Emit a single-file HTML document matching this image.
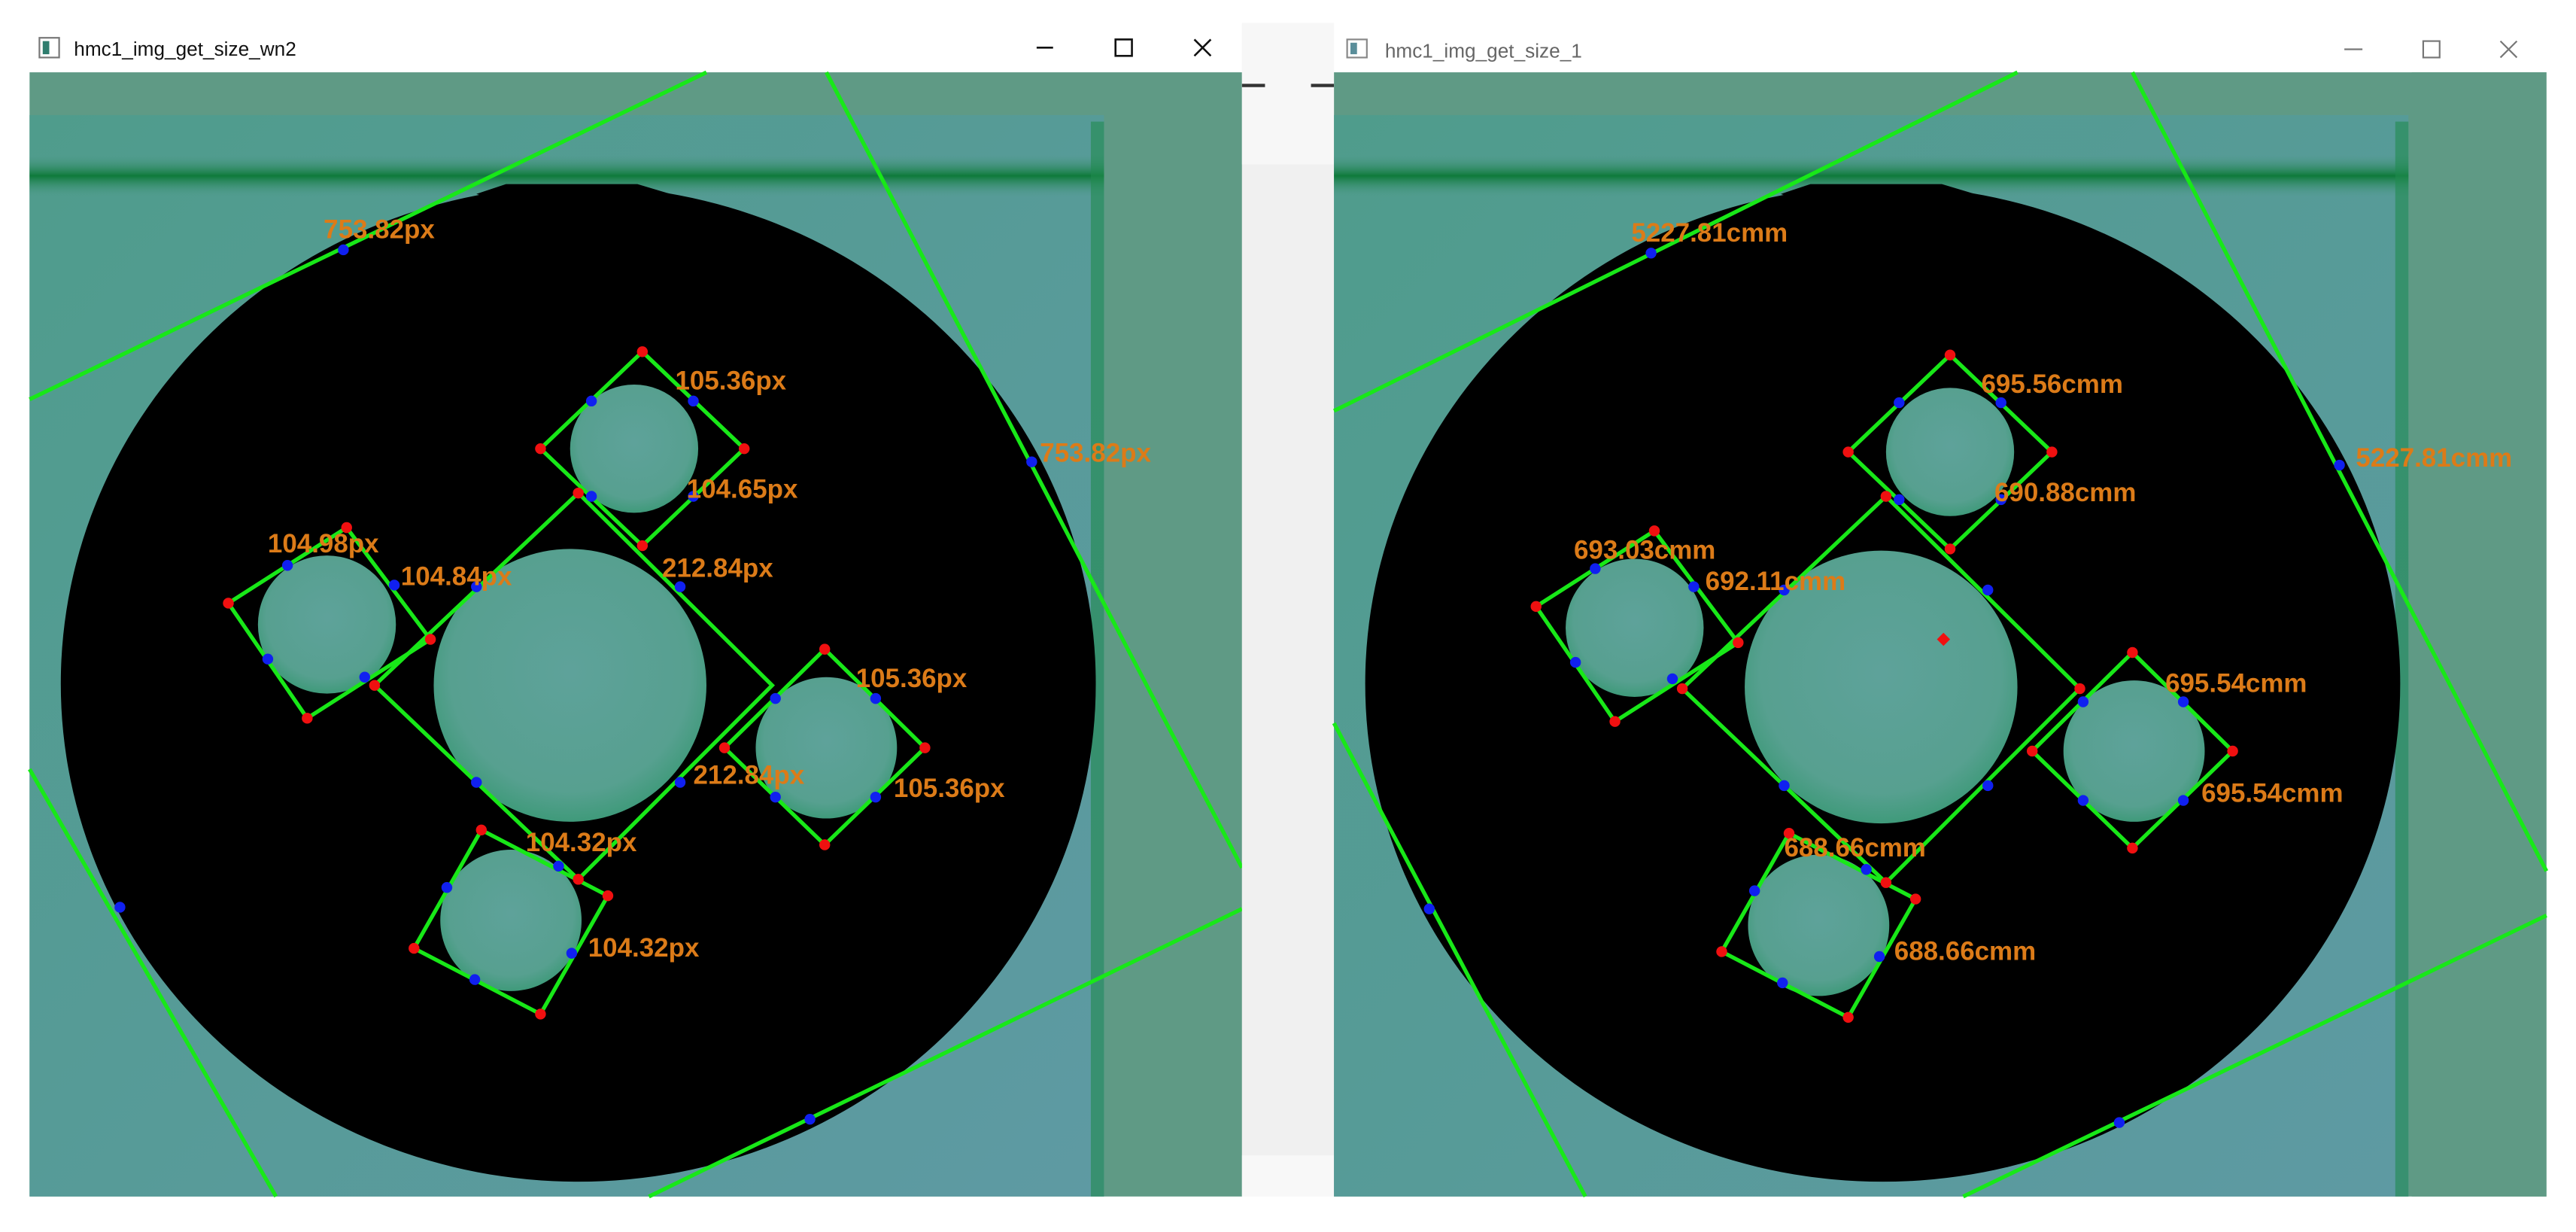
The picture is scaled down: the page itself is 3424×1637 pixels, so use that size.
<!DOCTYPE html>
<html><head><meta charset="utf-8"><style>
html,body{margin:0;padding:0;background:#fff;}
svg{display:block;}
text{font-family:"Liberation Sans",sans-serif;}
.o{fill:#dc7b18;font-size:16px;font-weight:bold;}
.t{font-size:12px;}
</style></head><body>
<svg width="3424" height="1637" viewBox="0 0 1568 749.6" preserveAspectRatio="none" xmlns="http://www.w3.org/2000/svg">
<defs>
<linearGradient id="tg" x1="0" x2="1" y1="0" y2="1">
<stop offset="0" stop-color="#4f9c8c"/><stop offset="1" stop-color="#5e9aa3"/></linearGradient>
<radialGradient id="hg" cx="0.5" cy="0.45" r="0.55">
<stop offset="0" stop-color="#5ea29a"/><stop offset="0.8" stop-color="#57a090"/><stop offset="1" stop-color="#3f9a7a"/></radialGradient>
<linearGradient id="bd" x1="0" x2="0" y1="0" y2="1">
<stop offset="0" stop-color="#4f9a88" stop-opacity="0"/><stop offset="0.5" stop-color="#0e7a3a"/><stop offset="1" stop-color="#4f9a88" stop-opacity="0"/></linearGradient>
<g id="scene">
<rect x="0" y="0" width="738" height="684" fill="#5f9a85"/>
<rect x="0" y="26" width="654" height="658" fill="url(#tg)"/>
<rect x="0" y="50" width="654" height="26" fill="url(#bd)"/>
<rect x="646" y="30" width="8" height="654" fill="#1f8a4e" opacity="0.6"/>
<ellipse cx="334" cy="372" rx="315" ry="303" fill="#000"/>
<path d="M272 74 L290 68 L370 68 L390 74 L360 84 L300 84 Z" fill="#000"/>
</g>
</defs>

<rect x="18" y="14" width="738" height="30" fill="#fff"/>
<rect x="24" y="23" width="12" height="12" fill="#fff" stroke="#777" stroke-width="1"/>
<rect x="26" y="25" width="4" height="8" fill="#2e7d6e"/>
<text x="45" y="34" class="t" fill="#111">hmc1_img_get_size_wn2</text>
<line x1="631" y1="29" x2="641" y2="29" stroke="#111" stroke-width="1.2"/>
<rect x="679" y="24" width="10" height="10" fill="none" stroke="#111" stroke-width="1.2"/>
<path d="M727 24 L737 34 M737 24 L727 34" stroke="#111" stroke-width="1.2"/>
<use href="#scene" x="18" y="44"/>
<g fill="url(#hg)">
<circle cx="347" cy="417" r="83"/><circle cx="386" cy="273" r="39"/><circle cx="199" cy="380" r="42"/><circle cx="503" cy="455" r="43"/><circle cx="311" cy="560" r="43"/>
</g>
<g stroke="#18e818" stroke-width="2.4" fill="none">
<line x1="18" y1="243" x2="430" y2="44"/>
<line x1="503" y1="44" x2="756" y2="528"/>
<line x1="18" y1="468" x2="168" y2="728"/>
<line x1="395" y1="728" x2="756" y2="553"/>
<polygon points="391,214 453,273 391,332 329,273"/>
<polygon points="352,300 470,417 352,535 228,417"/>
<polygon points="211,321 262,389 187,437 139,367"/>
<polygon points="502,395 563,455 502,514 441,455"/>
<polygon points="293,505 370,545 329,617 252,577"/>
</g>
<g fill="#f01010">
<circle cx="391" cy="214" r="3.3"/><circle cx="453" cy="273" r="3.3"/><circle cx="391" cy="332" r="3.3"/><circle cx="329" cy="273" r="3.3"/>
<circle cx="352" cy="300" r="3.3"/><circle cx="228" cy="417" r="3.3"/><circle cx="262" cy="389" r="3.3"/>
<circle cx="211" cy="321" r="3.3"/><circle cx="187" cy="437" r="3.3"/><circle cx="139" cy="367" r="3.3"/>
<circle cx="502" cy="395" r="3.3"/><circle cx="563" cy="455" r="3.3"/><circle cx="502" cy="514" r="3.3"/><circle cx="441" cy="455" r="3.3"/>
<circle cx="293" cy="505" r="3.3"/><circle cx="370" cy="545" r="3.3"/><circle cx="329" cy="617" r="3.3"/><circle cx="252" cy="577" r="3.3"/><circle cx="352" cy="535" r="3.3"/>
</g>
<g fill="#1020f0">
<circle cx="209" cy="152" r="3.3"/><circle cx="628" cy="281" r="3.3"/><circle cx="73" cy="552" r="3.3"/><circle cx="493" cy="681" r="3.3"/>
<circle cx="360" cy="244" r="3.3"/><circle cx="422" cy="244" r="3.3"/><circle cx="360" cy="302" r="3.3"/><circle cx="422" cy="302" r="3.3"/>
<circle cx="290" cy="357" r="3.3"/><circle cx="414" cy="357" r="3.3"/><circle cx="290" cy="476" r="3.3"/><circle cx="414" cy="476" r="3.3"/>
<circle cx="175" cy="344" r="3.3"/><circle cx="240" cy="356" r="3.3"/><circle cx="163" cy="401" r="3.3"/><circle cx="222" cy="412" r="3.3"/>
<circle cx="472" cy="425" r="3.3"/><circle cx="533" cy="425" r="3.3"/><circle cx="472" cy="485" r="3.3"/><circle cx="533" cy="485" r="3.3"/>
<circle cx="272" cy="540" r="3.3"/><circle cx="340" cy="527" r="3.3"/><circle cx="289" cy="596" r="3.3"/><circle cx="348" cy="580" r="3.3"/>
</g>
<g>
<text x="197" y="145" class="o">753.82px</text><text x="633" y="281" class="o">753.82px</text>
<text x="411" y="237" class="o">105.36px</text><text x="418" y="303" class="o">104.65px</text>
<text x="163" y="336" class="o">104.98px</text><text x="244" y="356" class="o">104.84px</text>
<text x="403" y="351" class="o">212.84px</text><text x="521" y="418" class="o">105.36px</text>
<text x="422" y="477" class="o">212.84px</text><text x="544" y="485" class="o">105.36px</text>
<text x="320" y="518" class="o">104.32px</text><text x="358" y="582" class="o">104.32px</text>
</g>

<rect x="756" y="14" width="56" height="714" fill="#f0f0f0"/>
<rect x="756" y="14" width="56" height="86" fill="#f7f7f7"/>
<rect x="756" y="51" width="14" height="2" fill="#333"/><rect x="798" y="51" width="14" height="2" fill="#333"/>
<rect x="756" y="703" width="56" height="25" fill="#f8f8f8"/>

<rect x="812" y="14" width="738" height="30" fill="#fff"/>
<rect x="820" y="24" width="12" height="11" fill="#fff" stroke="#888" stroke-width="1"/>
<rect x="822" y="26" width="4" height="7" fill="#5a8e9a"/>
<text x="843" y="35" class="t" fill="#666">hmc1_img_get_size_1</text>
<line x1="1427" y1="30" x2="1438" y2="30" stroke="#777" stroke-width="1"/>
<rect x="1475" y="25" width="10" height="10" fill="none" stroke="#777" stroke-width="1"/>
<path d="M1522 25 L1532 35 M1532 25 L1522 35" stroke="#777" stroke-width="1"/>
<use href="#scene" x="812" y="44"/>
<rect x="1468" y="44" width="82" height="684" fill="#5f9a85"/>
<g fill="url(#hg)">
<circle cx="1145" cy="418" r="83"/><circle cx="1187" cy="275" r="39"/><circle cx="995" cy="382" r="42"/><circle cx="1299" cy="457" r="43"/><circle cx="1107" cy="563" r="43"/>
</g>
<g stroke="#18e818" stroke-width="2.4" fill="none">
<line x1="812" y1="250" x2="1228" y2="44"/>
<line x1="1298" y1="44" x2="1550" y2="530"/>
<line x1="812" y1="440" x2="965" y2="728"/>
<line x1="1195" y1="728" x2="1550" y2="557"/>
<polygon points="1187,216 1249,275 1187,334 1125,275"/>
<polygon points="1148,302 1266,419 1148,537 1024,419"/>
<polygon points="1007,323 1058,391 983,439 935,369"/>
<polygon points="1298,397 1359,457 1298,516 1237,457"/>
<polygon points="1089,507 1166,547 1125,619 1048,579"/>
</g>
<g fill="#f01010">
<circle cx="1187" cy="216" r="3.3"/><circle cx="1249" cy="275" r="3.3"/><circle cx="1187" cy="334" r="3.3"/><circle cx="1125" cy="275" r="3.3"/>
<circle cx="1148" cy="302" r="3.3"/><circle cx="1024" cy="419" r="3.3"/><circle cx="1058" cy="391" r="3.3"/><circle cx="1266" cy="419" r="3.3"/>
<circle cx="1007" cy="323" r="3.3"/><circle cx="983" cy="439" r="3.3"/><circle cx="935" cy="369" r="3.3"/>
<circle cx="1298" cy="397" r="3.3"/><circle cx="1359" cy="457" r="3.3"/><circle cx="1298" cy="516" r="3.3"/><circle cx="1237" cy="457" r="3.3"/>
<circle cx="1089" cy="507" r="3.3"/><circle cx="1166" cy="547" r="3.3"/><circle cx="1125" cy="619" r="3.3"/><circle cx="1048" cy="579" r="3.3"/><circle cx="1148" cy="537" r="3.3"/>
<path d="M1183 385 L1187 389 L1183 393 L1179 389 Z"/>
</g>
<g fill="#1020f0">
<circle cx="1005" cy="154" r="3.3"/><circle cx="1424" cy="283" r="3.3"/><circle cx="870" cy="553" r="3.3"/><circle cx="1290" cy="683" r="3.3"/>
<circle cx="1156" cy="245" r="3.3"/><circle cx="1218" cy="245" r="3.3"/><circle cx="1156" cy="304" r="3.3"/><circle cx="1218" cy="304" r="3.3"/>
<circle cx="1086" cy="359" r="3.3"/><circle cx="1210" cy="359" r="3.3"/><circle cx="1086" cy="478" r="3.3"/><circle cx="1210" cy="478" r="3.3"/>
<circle cx="971" cy="346" r="3.3"/><circle cx="1031" cy="357" r="3.3"/><circle cx="959" cy="403" r="3.3"/><circle cx="1018" cy="413" r="3.3"/>
<circle cx="1268" cy="427" r="3.3"/><circle cx="1329" cy="427" r="3.3"/><circle cx="1268" cy="487" r="3.3"/><circle cx="1329" cy="487" r="3.3"/>
<circle cx="1068" cy="542" r="3.3"/><circle cx="1136" cy="529" r="3.3"/><circle cx="1085" cy="598" r="3.3"/><circle cx="1144" cy="582" r="3.3"/>
</g>
<g>
<text x="993" y="147" class="o">5227.81cmm</text><text x="1434" y="284" class="o">5227.81cmm</text>
<text x="1206" y="239" class="o">695.56cmm</text><text x="1214" y="305" class="o">690.88cmm</text>
<text x="958" y="340" class="o">693.03cmm</text><text x="1038" y="359" class="o">692.11cmm</text>
<text x="1318" y="421" class="o">695.54cmm</text><text x="1340" y="488" class="o">695.54cmm</text>
<text x="1086" y="521" class="o">688.66cmm</text><text x="1153" y="584" class="o">688.66cmm</text>
</g>
</svg>
</body></html>
